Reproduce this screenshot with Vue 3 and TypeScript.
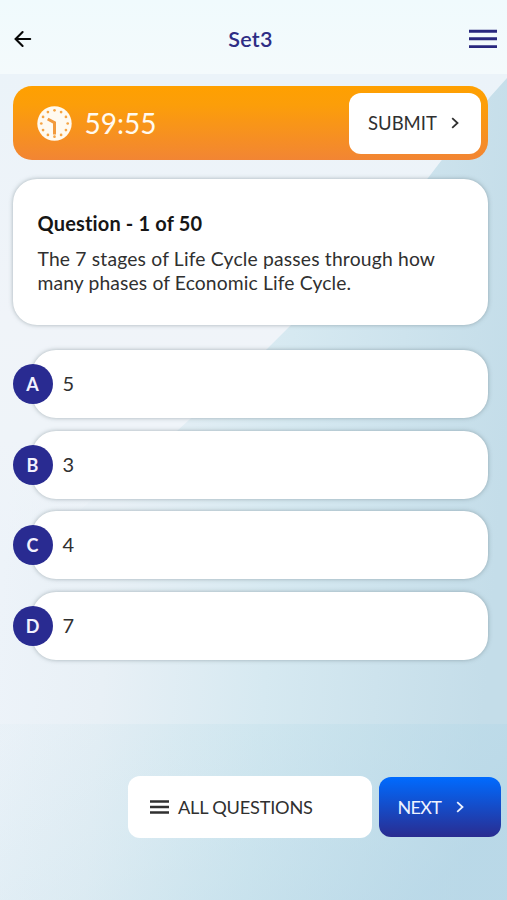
<script setup lang="ts">
import { ref } from 'vue'

interface Option {
  key: string
  text: string
}

const options: Option[] = [
  { key: 'A', text: '5' },
  { key: 'B', text: '3' },
  { key: 'C', text: '4' },
  { key: 'D', text: '7' },
]

const remaining = ref('59:55')

// Twelve hour marks around the clock face
const marks = Array.from({ length: 12 }, (_, i) => {
  const a = (i * Math.PI) / 6
  return { x: 17.5 + 13.2 * Math.sin(a), y: 17.5 - 13.2 * Math.cos(a) }
})
</script>

<template>
  <div class="screen">
    <svg class="backdrop" viewBox="0 0 507 900" aria-hidden="true">
      <defs>
        <linearGradient id="base" gradientUnits="userSpaceOnUse" x1="0" y1="600" x2="490" y2="640">
          <stop offset="0" stop-color="#edf3f9" />
          <stop offset=".22" stop-color="#e8f0f6" />
          <stop offset=".55" stop-color="#d6e9f1" />
          <stop offset="1" stop-color="#c4dde9" />
        </linearGradient>
        <linearGradient id="light" gradientUnits="userSpaceOnUse" x1="0" y1="74" x2="0" y2="560">
          <stop offset="0" stop-color="#ebf3f9" />
          <stop offset=".5" stop-color="#f0f4f9" />
          <stop offset=".75" stop-color="#eff4f9" />
          <stop offset="1" stop-color="#eff4f9" stop-opacity="0" />
        </linearGradient>
        <linearGradient id="floor" gradientUnits="userSpaceOnUse" x1="60" y1="690" x2="330" y2="980">
          <stop offset="0" stop-color="#c0e0ea" stop-opacity=".08" />
          <stop offset=".4" stop-color="#bfdfea" stop-opacity=".3" />
          <stop offset="1" stop-color="#b4d6e7" stop-opacity=".65" />
        </linearGradient>
      </defs>
      <rect width="507" height="900" fill="url(#base)" />
      <path class="beam" d="M0 0H507V78L490 97L428 178L291 325L267 349L178 430L80 510L0 560Z" />
      <path class="ground" d="M0 724H507V900H0Z" />
    </svg>

    <header class="bar">
      <svg class="back" width="18" height="18" viewBox="0 0 18 18">
        <path d="M16.2 9H2M8.6 2L1.6 9L8.6 16" />
      </svg>
      <h1 class="title">Set3</h1>
      <svg class="menu" width="28" height="20" viewBox="0 0 28 20">
        <path d="M0 2.2H28M0 9.8H28M0 17.6H28" />
      </svg>
    </header>

    <main class="content">
      <section class="timer">
        <svg class="clock" width="35" height="35" viewBox="0 0 35 35">
          <circle cx="17.5" cy="17.5" r="17.2" fill="#fffaf0" />
          <circle v-for="(m, i) in marks" :key="i" :cx="m.x" :cy="m.y" r="1.35" fill="#f5a545" />
          <path d="M10.7 13L17.5 16.6V28.5" />
        </svg>
        <span class="time">{{ remaining }}</span>
        <button class="submit">
          <span class="submit-label">SUBMIT</span>
          <svg width="8" height="12" viewBox="0 0 8 12"><path d="M1.2 1.2L6.5 6L1.2 10.8" /></svg>
        </button>
      </section>

      <section class="question">
        <h2>Question - 1 of 50</h2>
        <p><span class="line first">The 7 stages of Life Cycle passes through how</span> <span class="line second">many phases of Economic Life Cycle.</span></p>
      </section>

      <ul class="options">
        <li v-for="o in options" :key="o.key" class="option">
          <span class="badge">{{ o.key }}</span>
          <span class="answer">{{ o.text }}</span>
        </li>
      </ul>
    </main>

    <footer class="actions">
      <button class="all">
        <svg width="19" height="14" viewBox="0 0 19 14"><path d="M0 1.5H19M0 7H19M0 12.5H19" /></svg>
        <span class="all-label">ALL QUESTIONS</span>
      </button>
      <button class="next">
        <span class="next-label">NEXT</span>
        <svg width="8" height="12" viewBox="0 0 8 12"><path d="M1.2 1.2L6.5 6L1.2 10.8" /></svg>
      </button>
    </footer>
  </div>
</template>

<style>
body {
  margin: 0;
}
</style>

<style scoped>
.screen {
  position: relative;
  display: flex;
  flex-direction: column;
  width: 507px;
  height: 900px;
  overflow: hidden;
  font-family: Lato, 'Open Sans', sans-serif;
  font-variant-ligatures: none;
  color: #303030;
}
.backdrop {
  position: absolute;
  inset: 0;
}
.bar,
.content,
.actions {
  position: relative;
}
button {
  display: flex;
  align-items: center;
  box-sizing: border-box;
  border: 0;
  font: inherit;
  color: inherit;
  white-space: nowrap;
}
svg path {
  fill: none;
}
.backdrop .beam {
  fill: url(#light);
}
.backdrop .ground {
  fill: url(#floor);
}
.bar {
  display: flex;
  align-items: center;
  justify-content: space-between;
  height: 74px;
  box-sizing: border-box;
  padding: 4px 10px 0 14px;
  background: linear-gradient(#f0fafd, #f4fafc);
}
.back path {
  stroke: #080808;
  stroke-width: 2.1;
  stroke-linecap: round;
}
.title {
  margin: 0;
  font-size: 21.5px;
  line-height: 28px;
  font-weight: 600;
  letter-spacing: 0.3px;
  color: #2e2d85;
}
.menu path {
  stroke: #28277e;
  stroke-width: 2.9;
}
.content {
  padding: 12px 19px 0 12.5px;
}
.timer {
  display: flex;
  align-items: center;
  height: 74px;
  box-sizing: border-box;
  padding: 0 7px 0 24.5px;
  border-radius: 19px;
  background: linear-gradient(#ffa000, #fc9e09 25%, #f28534);
}
.clock path {
  stroke: #f29a3c;
  stroke-width: 3;
}
.time {
  flex: 1;
  margin-left: 12.5px;
  font-size: 28px;
  color: #fffaf0;
}
.submit {
  width: 132px;
  height: 61px;
  padding: 0 0 0 19px;
  gap: 14.5px;
  border-radius: 12px;
  background: #fff;
  font-size: 18.5px;
}
.submit path {
  stroke: #303030;
  stroke-width: 1.8;
}
.question {
  height: 146px;
  margin-top: 19px;
  box-sizing: border-box;
  padding: 31px 25px 0;
  border-radius: 24px;
  background: #fff;
  box-shadow: 0 0 4px rgba(90, 110, 115, 0.5);
}
.question h2 {
  margin: 0;
  font-size: 20px;
  line-height: 26px;
  font-weight: 700;
  letter-spacing: 0.16px;
  color: #161616;
}
.question p {
  margin: 11px 0 0;
  font-size: 19.3px;
  line-height: 23.5px;
}
.line {
  display: block;
  white-space: nowrap;
}
.first {
  letter-spacing: 0.18px;
}
.second {
  letter-spacing: 0.13px;
}
.options {
  display: grid;
  gap: 12.6px;
  margin: 25px 0 0;
  padding: 0;
  list-style: none;
}
.option {
  display: flex;
  align-items: center;
  height: 68px;
  margin-left: 19.5px;
  border-radius: 24px;
  background: #fff;
  box-shadow: 0 0 4px rgba(90, 110, 115, 0.5);
}
.badge {
  display: grid;
  place-items: center;
  width: 40px;
  height: 40px;
  margin-left: -19.5px;
  border-radius: 50%;
  background: #292b91;
  font-size: 18px;
  font-weight: 700;
  color: #f2f2ff;
}
.answer {
  margin: -2px 0 0 10px;
  font-size: 20px;
}
.actions {
  display: flex;
  align-items: center;
  justify-content: flex-end;
  gap: 6.5px;
  margin-top: 116.5px;
  padding-right: 6.5px;
}
.all {
  width: 244px;
  height: 62px;
  padding: 0 0 0 22px;
  gap: 9px;
  border-radius: 12px;
  background: #fff;
  font-size: 18.2px;
  letter-spacing: -0.22px;
}
.all path {
  stroke: #303030;
  stroke-width: 2.6;
}
.next {
  width: 122px;
  height: 60px;
  padding: 0 0 0 19px;
  gap: 15px;
  border-radius: 12px;
  background: linear-gradient(#006bff, #2a2c90);
  font-size: 18px;
  letter-spacing: -0.7px;
  color: #eef3ff;
}
.next path {
  stroke: #eef3ff;
  stroke-width: 1.8;
}
</style>
